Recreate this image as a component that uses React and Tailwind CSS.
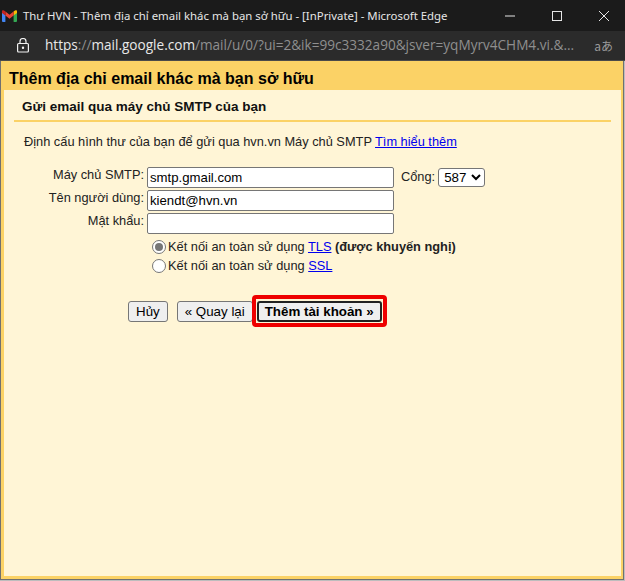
const font = { fontFamily: '"Liberation Sans", Arial, sans-serif' };

function Gmail() {
  return (
    <svg width="15" height="12" viewBox="0 0 15 12" className="shrink-0">
      <path d="M0 2.2 V11 a1 1 0 0 0 1 1 H3.4 V5 Z" fill="#4285f4" />
      <path d="M15 2.2 V11 a1 1 0 0 1 -1 1 H11.6 V5 Z" fill="#34a853" />
      <path d="M11.6 1.6 L13 .5 a1.2 1.2 0 0 1 2 1 V3 L11.6 5.6 Z" fill="#fbbc04" />
      <path d="M3.4 5.6 L7.5 8.7 L11.6 5.6 V1.6 L7.5 4.7 L3.4 1.6 Z" fill="#ea4335" />
      <path d="M0 3 V1.5 a1.2 1.2 0 0 1 2-1 L3.4 1.6 V5.6 Z" fill="#c5221f" />
    </svg>
  );
}

function Field({ label, value, extra }) {
  return (
    <div className="flex h-[23px] items-start">
      <div className="w-[143px] text-right text-[12.8px] leading-[15px] text-[#222]">{label}</div>
      <input
        readOnly
        value={value}
        className="ml-[3px] h-[21px] w-[247px] rounded-[2px] border border-[#767676] bg-white px-[2px] text-[13.2px] text-black outline-none"
      />
      {extra}
    </div>
  );
}

function Radio({ checked, children }) {
  return (
    <div className="flex h-[19px] items-center text-[12.8px] text-[#222]">
      <span className="flex h-[14px] w-[14px] shrink-0 items-center justify-center rounded-full border border-[#767676] bg-white">
        {checked && <span className="h-[8px] w-[8px] rounded-full bg-[#767676]" />}
      </span>
      <span className="ml-[2px]">{children}</span>
    </div>
  );
}

const btn = "mt-px h-[21px] rounded-[3px] border border-[#767676] bg-[#efefef] px-[7px] text-[13.33px] leading-[15px] text-black";

export default function App() {
  return (
    <div style={font} className="flex h-[581px] w-[625px] flex-col overflow-hidden bg-[#1b1b1b]">
      <div className="flex h-[31px] shrink-0 items-center pl-[2px] text-[#e6e6e6]">
        <Gmail />
        <span className="ml-[6px] mt-px whitespace-nowrap" style={{ fontFamily: '"Noto Sans", sans-serif', fontSize: 11.4 }}>
          Thư HVN - Thêm địa chỉ email khác mà bạn sở hữu - [InPrivate] - Microsoft Edge
        </span>
        <div className="ml-auto flex items-center">
          <svg width="12" height="12" viewBox="0 0 12 12" className="mr-[35px]"><path d="M1 6h10" stroke="#e6e6e6" /></svg>
          <svg width="12" height="12" viewBox="0 0 12 12" className="mr-[35px]"><rect x="1.5" y="1.5" width="9" height="9" fill="none" stroke="#e6e6e6" /></svg>
          <svg width="12" height="12" viewBox="0 0 12 12" className="mr-[15px]"><path d="M1 1l10 10M11 1L1 11" stroke="#e6e6e6" /></svg>
        </div>
      </div>
      <div className="flex h-[30px] shrink-0 items-center border-b border-[#4a4a4a] bg-[#2b2b2b] pl-[16px] pr-[12px]">
        <svg width="14" height="16" viewBox="0 0 14 16" fill="none" stroke="#f0f0f0" strokeWidth="1.2" className="shrink-0">
          <rect x="1.6" y="5.5" width="10.8" height="8.5" rx="1" />
          <path d="M4 5.5V3.5a3 3 0 0 1 6 0v2" />
          <circle cx="7" cy="9.7" r=".6" fill="#f0f0f0" />
        </svg>
        <div className="ml-[15px] min-w-0 flex-1 whitespace-nowrap" style={{ fontFamily: '"Open Sans", "Noto Sans", sans-serif', fontSize: 13.6 }}>
          <span className="text-[#e8e8e8]">https</span><span className="text-[#8f8f8f]">://</span><span className="text-[#e8e8e8]">mail.google.com</span><span className="text-[#8f8f8f]">/mail/u/0/?ui=2&amp;ik=99c3332a90&amp;jsver=yqMyrv4CHM4.vi.&amp;...</span>
        </div>
        <span className="text-[12px] text-[#9a9a9a]" style={{ fontFamily: '"Noto Sans CJK JP", sans-serif' }}>aあ</span>
      </div>
      <div className="flex min-h-0 flex-1 flex-col bg-[#bdbdbd] pr-px pb-px">
        <div className="flex min-h-0 flex-1 flex-col border-x border-b border-[#707070] bg-[#fbd266] pb-[3px]">
          <div className="h-[29px] shrink-0 pl-[8px] pt-[8px] text-[16px] leading-[20px] font-bold text-black">
            Thêm địa chỉ email khác mà bạn sở hữu
          </div>
          <div className="ml-[3px] mr-[2px] flex-1 bg-[#fff5d6]">
            <div className="mx-[10px] flex h-[32px] items-start border-b-2 border-[#fbd266] pl-[8px] pt-[9px] text-[13.5px] leading-[16px] font-bold text-[#111]">
              Gửi email qua máy chủ SMTP của bạn
            </div>
            <div className="mt-[11px] pl-[20px] text-[12.8px] leading-[17px] text-[#222]">
              Định cấu hình thư của bạn để gửi qua hvn.vn Máy chủ SMTP <a href="#" className="text-[#0000ee] underline">Tìm hiểu thêm</a>
            </div>
            <div className="mt-[17px] -ml-[3px]">
              <Field
                label="Máy chủ SMTP:"
                value="smtp.gmail.com"
                extra={
                  <div className="flex items-center">
                    <span className="ml-[7px] text-[12.8px] leading-[20px] text-[#222]">Cổng:</span>
                    <select className="ml-[3px] mt-px h-[19px] w-[47px] rounded-[3px] border border-[#767676] bg-white pl-px text-[13.33px] text-black">
                      <option>587</option>
                    </select>
                  </div>
                }
              />
              <Field label="Tên người dùng:" value="kiendt@hvn.vn" />
              <Field label="Mật khẩu:" value="" />
              <div className="ml-[151px] mt-px">
                <Radio checked>Kết nối an toàn sử dụng <a href="#" className="text-[#0000ee] underline">TLS</a> <b>(được khuyến nghị)</b></Radio>
                <Radio>Kết nối an toàn sử dụng <a href="#" className="text-[#0000ee] underline">SSL</a></Radio>
              </div>
              <div className="ml-[127px] mt-[20px] flex items-center">
                <button className={btn}>Hủy</button>
                <button className={btn + " ml-[9px]"}>« Quay lại</button>
                <div className="-ml-px rounded-[4px] border-[4px] border-[#ee0000] p-px pt-[2px]">
                  <button className="block h-[21px] rounded-[3px] border-2 border-[#222] bg-[#efefef] px-[6px] text-[13.33px] leading-[14px] font-bold text-black">Thêm tài khoản »</button>
                </div>
              </div>
            </div>
          </div>
        </div>
      </div>
    </div>
  );
}
